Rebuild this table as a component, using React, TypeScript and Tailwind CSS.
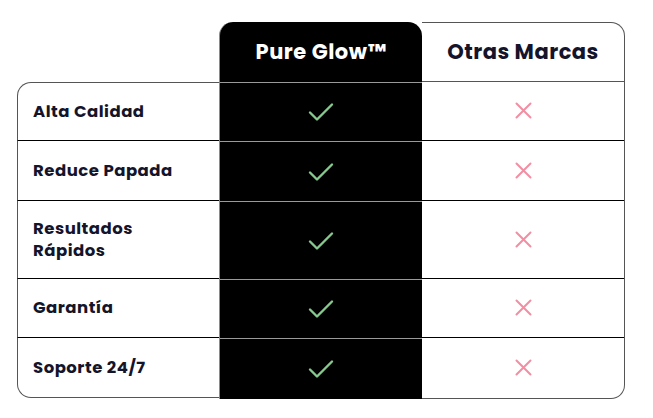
const rows = [
  { label: "Alta Calidad", h: "h-[59px]" },
  { label: "Reduce Papada", h: "h-[60px]" },
  { label: "Resultados Rápidos", h: "h-[78px]" },
  { label: "Garantía", h: "h-[59px]" },
  { label: "Soporte 24/7", h: "h-[60px]" },
];

function CheckIcon() {
  return (
    <svg width="26" height="20" viewBox="0 0 26 20" fill="none">
      <path
        d="M2 10.5 9 17.5 24 2.5"
        stroke="#86c98e"
        strokeWidth="2.4"
        strokeLinecap="round"
        strokeLinejoin="round"
      />
    </svg>
  );
}

function XIcon() {
  return (
    <svg width="17" height="17" viewBox="0 0 17 17" fill="none">
      <path
        d="M1.5 1.5 15.5 15.5M15.5 1.5 1.5 15.5"
        stroke="#f28ea2"
        strokeWidth="2"
        strokeLinecap="round"
      />
    </svg>
  );
}

export default function App() {
  return (
    <div className="min-h-[418px] w-[653px] bg-white font-['Poppins','Inter',sans-serif] text-[#14142b]">
      <div className="ml-[17px] pt-[22px] flex w-[608px]">
        {/* feature labels */}
        <div className="flex flex-col w-[202px]">
          <div className="h-[60px]" />
          {rows.map((row, i) => (
            <div
              key={row.label}
              className={`${row.h} flex items-center px-[15px] border-l-[1.5px] border-l-[#555] border-b ${
                i === rows.length - 1 ? "border-b-[#555] rounded-bl-[14px] border-b-[1.5px]" : "border-b-black"
              } ${i === 0 ? "border-t-[1.5px] border-t-[#555] rounded-tl-[14px]" : ""}`}
            >
              <span className="text-[16.5px] font-bold leading-[22px] tracking-[0.5px] w-[150px]">
                {row.label}
              </span>
            </div>
          ))}
        </div>

        {/* Pure Glow column */}
        <div className="flex flex-col w-[203px] bg-black rounded-t-[14px] border-l border-[#8a8a8a]">
          <div className="h-[60px] flex items-center justify-center">
            <span className="text-white text-[21px] font-bold tracking-[0.5px]">Pure Glow™</span>
          </div>
          {rows.map((row) => (
            <div
              key={row.label}
              className={`${row.h} flex items-center justify-center border-t border-[#9a9a9a]`}
            >
              <CheckIcon />
            </div>
          ))}
        </div>

        {/* Otras Marcas column */}
        <div className="flex flex-col w-[203px] border-t-[1.5px] border-r-[1.5px] border-b-[1.5px] border-[#555] rounded-tr-[14px] rounded-br-[14px]">
          <div className="h-[58.5px] flex items-center justify-center border-b-[1.5px] border-[#555]">
            <span className="text-[21px] font-bold tracking-[0.5px]">Otras Marcas</span>
          </div>
          {rows.map((row, i) => (
            <div
              key={row.label}
              className={`${row.h} flex items-center justify-center ${
                i < rows.length - 1 ? "border-b border-black" : ""
              }`}
            >
              <XIcon />
            </div>
          ))}
        </div>
      </div>
    </div>
  );
}
